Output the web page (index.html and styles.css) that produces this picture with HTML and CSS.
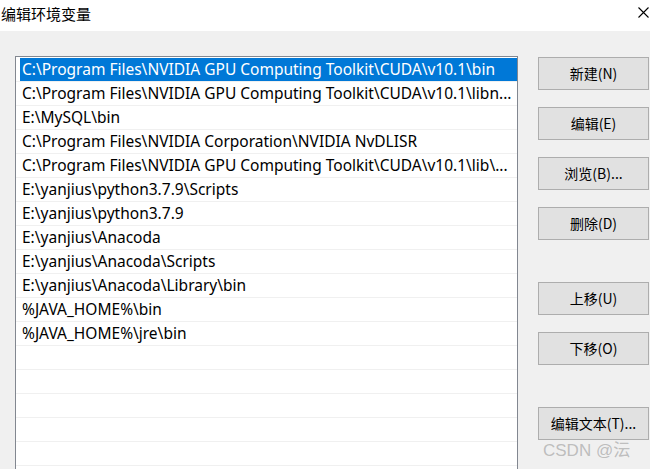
FILE: index.html
```html
<!DOCTYPE html>
<html lang="zh-CN">
<head>
    <meta charset="UTF-8">
    <title>编辑环境变量</title>
    <link rel="stylesheet" href="styles.css">
</head>
<body>

    <!-- Title bar -->
    <div class="titlebar">
        <span class="title">编辑环境变量</span>
        <span class="close">
            <svg width="11" height="11" viewBox="0 0 11 11"><path d="M0.5 0.5 L10.5 10.5 M10.5 0.5 L0.5 10.5" stroke="#000" stroke-width="1.1" fill="none"/></svg>
        </span>
    </div>

    <div class="dialog">
        <!-- Path list -->
        <div class="list">
            <div class="row selected"><span class="cell">C:\Program Files\NVIDIA GPU Computing Toolkit\CUDA\v10.1\bin</span></div>
            <div class="row"><span class="cell">C:\Program Files\NVIDIA GPU Computing Toolkit\CUDA\v10.1\libn...</span></div>
            <div class="row"><span class="cell">E:\MySQL\bin</span></div>
            <div class="row"><span class="cell">C:\Program Files\NVIDIA Corporation\NVIDIA NvDLISR</span></div>
            <div class="row"><span class="cell">C:\Program Files\NVIDIA GPU Computing Toolkit\CUDA\v10.1\lib\...</span></div>
            <div class="row"><span class="cell">E:\yanjius\python3.7.9\Scripts</span></div>
            <div class="row"><span class="cell">E:\yanjius\python3.7.9</span></div>
            <div class="row"><span class="cell">E:\yanjius\Anacoda</span></div>
            <div class="row"><span class="cell">E:\yanjius\Anacoda\Scripts</span></div>
            <div class="row"><span class="cell">E:\yanjius\Anacoda\Library\bin</span></div>
            <div class="row"><span class="cell">%JAVA_HOME%\bin</span></div>
            <div class="row"><span class="cell">%JAVA_HOME%\jre\bin</span></div>
            <div class="row"><span class="cell"></span></div>
            <div class="row"><span class="cell"></span></div>
            <div class="row"><span class="cell"></span></div>
            <div class="row"><span class="cell"></span></div>
            <div class="row"><span class="cell"></span></div>
        </div>

        <!-- Buttons -->
        <div class="buttons">
            <button class="btn">新建(N)</button>
            <button class="btn">编辑(E)</button>
            <button class="btn">浏览(B)...</button>
            <button class="btn">删除(D)</button>
            <button class="btn group">上移(U)</button>
            <button class="btn">下移(O)</button>
            <button class="btn group">编辑文本(T)...</button>
        </div>
    </div>

    <div class="watermark">CSDN @沄</div>

</body>
</html>
```

FILE: styles.css
```css
body {
    margin: 0;
    width: 650px;
    height: 469px;
    overflow: hidden;
    background-color: #f0f0f0;
    font-family: "Noto Sans", "Noto Sans CJK SC", sans-serif;
    position: relative;
}

/* Title bar */
.titlebar {
    height: 31px;
    background: #fff;
    display: flex;
    align-items: center;
    justify-content: space-between;
}

.title {
    font-family: "Noto Sans CJK SC", sans-serif;
    font-size: 15px;
    padding-left: 1px;
    margin-top: -4px;
    color: #000;
}

.close {
    display: flex;
    margin-right: 1px;
    margin-top: -6px;
}

.dialog {
    display: flex;
    padding: 25px 0 0 15px;
}

/* List */
.list {
    width: 501px;
    height: 430px;
    border: 1px solid #828790;
    background: #fff;
    padding-top: 1px;
    overflow: hidden;
}

.row {
    height: 23px;
    border-bottom: 1px solid #f0f0f0;
    display: flex;
    font-size: 15.5px;
    line-height: 23px;
    color: #000;
}

.cell {
    flex: 1;
    min-width: 0;
    margin-left: 4px;
    padding-left: 2px;
    white-space: nowrap;
    overflow: hidden;
}

.row.selected .cell {
    background: #0078d7;
    color: #fff;
}

/* Buttons */
.buttons {
    display: flex;
    flex-direction: column;
    gap: 17px;
    margin-left: 20px;
    margin-top: 1px;
}

.btn {
    width: 111px;
    height: 33px;
    background: #e1e1e1;
    border: 1px solid #adadad;
    font-family: "Noto Sans CJK SC", sans-serif;
    font-size: 14px;
    color: #000;
    padding: 0 0 2px;
}

.btn.group {
    margin-top: 25px;
}

.watermark {
    position: absolute;
    left: 543px;
    top: 436px;
    font-family: "Liberation Sans", "Noto Sans CJK SC", sans-serif;
    font-size: 17px;
    color: rgba(160, 160, 160, 0.65);
}
```
